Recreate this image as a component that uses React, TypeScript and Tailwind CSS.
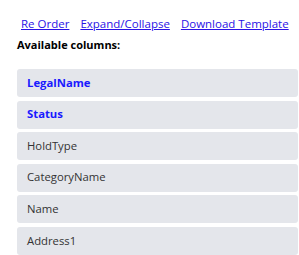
const columns = [
  { name: 'LegalName', required: true },
  { name: 'Status', required: true },
  { name: 'HoldType', required: false },
  { name: 'CategoryName', required: false },
  { name: 'Name', required: false },
  { name: 'Address1', required: false },
]

export default function App() {
  return (
    <div className="w-[299px] h-[255px] overflow-hidden bg-white font-['Open_Sans',sans-serif]">
      <div className="flex gap-[11px] pl-[21px] pt-[15px] text-[11.5px] leading-[17px] whitespace-nowrap">
        <a href="#" className="text-[#2a12e6] underline">Re Order</a>
        <a href="#" className="text-[#2a12e6] underline">Expand/Collapse</a>
        <a href="#" className="text-[#2a12e6] underline">Download Template</a>
      </div>
      <div className="pl-[17px] pt-[5px] text-[11px] leading-[16px] font-bold text-black whitespace-nowrap">
        Available columns:
      </div>
      <div className="flex flex-col gap-[3.6px] pl-[17px] pr-[1px] pt-[16px]">
        {columns.map(c => (
          <div
            key={c.name}
            className="h-[28px] shrink-0 rounded-[3px] bg-[#e4e6eb] flex items-center pl-[10px] text-[11.3px] whitespace-nowrap"
          >
            <span className={c.required ? 'font-bold text-[#1a1aff]' : 'text-[#333]'}>{c.name}</span>
          </div>
        ))}
      </div>
    </div>
  )
}
